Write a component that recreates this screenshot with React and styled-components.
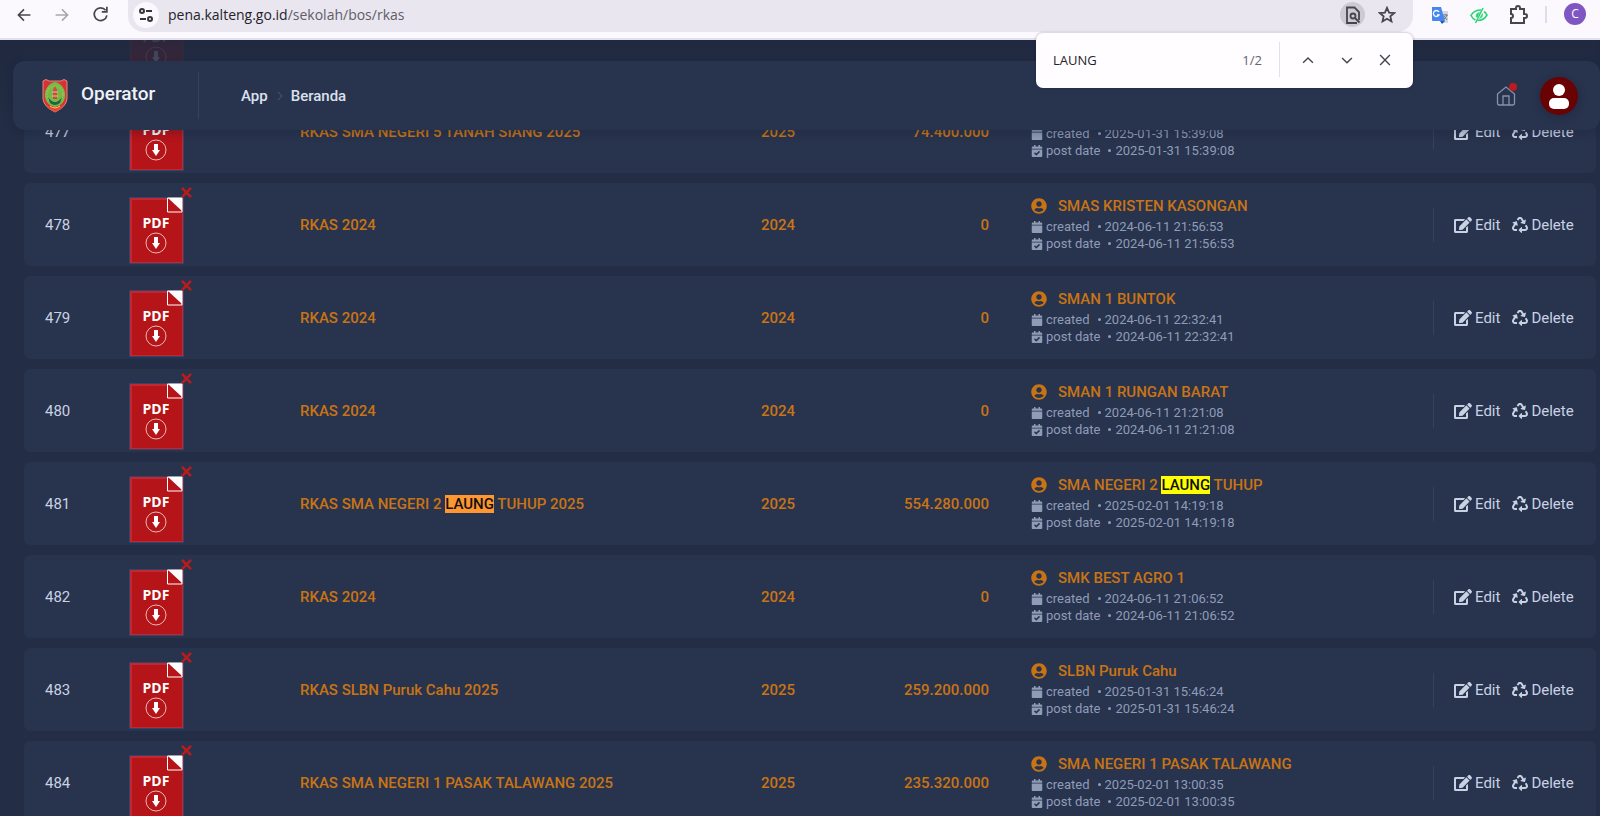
import React from "react";
import styled, { createGlobalStyle, css } from "styled-components";
import { FaUserCircle, FaCalendar, FaCalendarCheck, FaEdit, FaRecycle } from "react-icons/fa";

const GlobalStyle = createGlobalStyle`
  * { box-sizing: border-box; }
  body { margin: 0; background: #232d45; font-family: Roboto, sans-serif; }
  a { color: inherit; text-decoration: none; }
  button { border: 0; padding: 0; background: none; color: inherit; font: inherit; cursor: pointer; }
`;

const Shell = styled.div`
  display: flex;
  flex-direction: column;
  height: 100vh;
  overflow: hidden;
`;

/* browser toolbar */

const Toolbar = styled.div`
  position: relative;
  z-index: 3;
  flex: none;
  display: flex;
  align-items: flex-start;
  height: 40px;
  padding: 0 14px 0 12px;
  background: #fbf8fe;
  border-bottom: 2px solid #e3e0ee;
  font-family: "Open Sans", sans-serif;
`;

const ToolButton = styled.button`
  display: flex;
  align-items: center;
  justify-content: center;
  width: ${(p) => p.$width || 39}px;
  height: 29px;
  color: ${(p) => (p.$dim ? "#a9a7ae" : "#47464d")};
`;

const AddressBar = styled.form`
  flex: 1;
  display: flex;
  align-items: center;
  height: 32px;
  margin: 0 7px 0 16px;
  padding: 0 14px 3px 5px;
  background: #e9e6f0;
  border-radius: 0 0 16px 16px;
`;

const SiteButton = styled.button`
  display: flex;
  align-items: center;
  justify-content: center;
  width: 26px;
  height: 26px;
  border-radius: 50%;
  background: #fbf8fe;
  color: #36353b;
`;

const Address = styled.a`
  flex: 1;
  padding-left: 9px;
  font-size: 14px;
  line-height: 24px;
  color: #5f5d66;
  strong { font-weight: 400; color: #24232a; }
`;

const PillButton = styled.button`
  display: flex;
  align-items: center;
  justify-content: center;
  width: 25px;
  height: 25px;
  margin-left: 9px;
  border-radius: 50%;
  background: ${(p) => (p.$active ? "#cdcad4" : "transparent")};
  color: #47464d;
`;

const ToolDivider = styled.span`
  width: 2px;
  height: 17px;
  margin: 6px 17px 0 8px;
  background: #e0dbef;
`;

const Profile = styled.button`
  width: 22px;
  height: 22px;
  margin-top: 3px;
  && { background: #7e57c2; color: #fff; font-size: 12px; line-height: 22px; }
  border-radius: 50%;
`;

const FindBar = styled.form`
  position: absolute;
  top: 33px;
  right: 187px;
  display: flex;
  align-items: center;
  width: 377px;
  height: 55px;
  padding: 0 9px 2px 17px;
  border-radius: 7px;
  background: #fffdff;
  box-shadow: 0 0 3px rgba(20, 20, 50, 0.35);
`;

const FindInput = styled.input`
  flex: 1;
  min-width: 0;
  border: 0;
  padding: 0;
  outline: 0;
  background: none;
  font: 13px "Open Sans", sans-serif;
  color: #24232a;
`;

const FindCount = styled.output`
  padding-right: 17px;
  font-size: 13px;
  color: #66646c;
`;

const FindDivider = styled.span`
  width: 1px;
  height: 35px;
  margin-right: 8px;
  background: #e4e0ea;
`;

/* application */

const Viewport = styled.main`
  position: relative;
  flex: 1;
  min-height: 0;
  overflow: hidden;
`;

const TopFade = styled.div`
  position: absolute;
  inset: 0 0 auto;
  height: 72px;
  background: linear-gradient(rgba(31, 40, 62, 0.9), rgba(33, 43, 66, 0.7));
`;

const AppBar = styled.header`
  position: absolute;
  top: 21px;
  left: 13px;
  right: 0;
  display: flex;
  align-items: center;
  height: 69px;
  padding: 0 22px 0 29px;
  border-radius: 12px;
  background: #28334e;
  box-shadow: 0 3px 8px rgba(20, 28, 48, 0.3);
`;

const Brand = styled.a`
  display: flex;
  align-items: center;
  gap: 13px;
  width: 157px;
  height: 47px;
  border-right: 1px solid #354260;
  padding-bottom: 4px;
  font-size: 19px;
  font-weight: 500;
  line-height: 24px;
  color: #eef1f7;
  svg { margin-top: 5px; }
`;

const Crumbs = styled.nav`
  flex: 1;
  display: flex;
  align-items: center;
  gap: 8px;
  padding-left: 42px;
  font-size: 15px;
  font-weight: 500;
  color: #dbe1ec;
`;

const HomeButton = styled.button`
  position: relative;
  display: flex;
  margin-right: 24px;
  && { color: #8592ad; }
`;

const Dot = styled.span`
  position: absolute;
  top: -3px;
  right: -1px;
  width: 8px;
  height: 8px;
  border-radius: 50%;
  background: #b91c1c;
`;

const Avatar = styled.button`
  width: 38px;
  height: 38px;
  && { background: #690203; }
  border-radius: 50%;
  box-shadow: 0 2px 8px rgba(15, 20, 35, 0.3);
`;

const ListWindow = styled.div`
  margin-top: -53px;
  padding: 0 4px 0 24px;
`;

const Table = styled.table`
  width: 100%;
  table-layout: fixed;
  border-collapse: separate;
  border-spacing: 0 10px;
`;

const Row = styled.tr`
  height: 83px;
  font-size: 15px;
  line-height: 20px;
  color: #c8d2e3;
`;

const Cell = styled.td`
  padding: 0 0 0 ${(p) => p.$indent || 0}px;
  background: #28334e;
  text-align: ${(p) => p.$align || "left"};
  &:first-child { border-radius: 6px 0 0 6px; }
  &:last-child { border-radius: 0 6px 6px 0; }
  ${(p) =>
    p.$accent &&
    css`
      color: #c97414;
      font-weight: 500;
    `}
`;

const FileBox = styled.div`
  display: flex;
  align-items: flex-start;
  height: 83px;
  padding-top: 3px;
  a { display: block; margin-top: 11px; }
  svg { display: block; }
  button { margin-left: -4px; color: #b91c1c; }
`;

const Owner = styled.div`
  padding-bottom: 3px;
`;

const School = styled.div`
  display: flex;
  align-items: center;
  gap: 11px;
  height: 24px;
  color: #c97414;
  font-weight: 500;
`;

const Meta = styled.div`
  display: flex;
  align-items: center;
  gap: 3px;
  font-size: 13px;
  line-height: 17px;
  color: #8f9cb7;
`;

const Stamp = styled.time`
  display: flex;
  align-items: center;
  gap: 4px;
  padding-left: 5px;
  &::before {
    content: "";
    width: 3px;
    height: 3px;
    border-radius: 50%;
    background: currentColor;
  }
`;

const Actions = styled.div`
  display: flex;
  align-items: center;
  gap: 12px;
  height: 34px;
  padding-left: 20px;
  border-left: 1px solid #35415e;
  a { display: flex; align-items: center; gap: 3px; }
`;

const Mark = styled.mark`
  color: #111;
  background: ${(p) => (p.$current ? "#ff9632" : "#ffff00")};
`;

const Line = ({ size = 20, d, width = 2, fill = "none" }) => (
  <svg width={size} height={size} viewBox="0 0 20 20" fill={fill} stroke="currentColor" strokeWidth={width} aria-hidden="true">
    <path d={d} />
  </svg>
);

const Crest = () => (
  <svg width="26" height="34" viewBox="0 0 26 34" aria-hidden="true">
    <path d="M1 2Q4-1 7 2H19Q22-1 25 2V20Q24 28 13 33Q2 28 1 20Z" fill="#dc3038" stroke="#d98c76" />
    <path d="M13 3C19 4 24 10 23 18C22 24 18 27 13 28C8 27 4 24 3 18C2 10 7 4 13 3Z" fill="#78b944" />
    <circle cx="13" cy="15" r="8" fill="none" stroke="#8fbf5a" strokeWidth="2" strokeDasharray="2 1" />
    <path d="M6 18Q13 28 20 18L18 24Q13 28 8 24Z" fill="#1c6744" />
    <path d="M13 7L15 11V20H11V11Z" fill="#cb4b42" />
    <path d="M10 13H16M10 17H16" stroke="#e8c39b" />
    <path d="M5 26L13 31L21 26L19 30L13 33L7 30Z" fill="#e94935" />
    <path d="M8 27Q13 31 18 27" fill="none" stroke="#f1db62" strokeWidth="1" />
  </svg>
);

const PdfIcon = () => (
  <svg width="55" height="67" viewBox="0 0 55 67" role="img" aria-label="PDF">
    <rect width="55" height="67" fill="#354466" />
    <rect x="1" y="1" width="53" height="65" fill="#c22735" />
    <rect x="3" y="3" width="50" height="62" fill="#b51419" />
    <path d="M38.500 1H53V15H38.500Z" fill="#b51419" stroke="#fff" />
    <path d="M39 1H53V14Z" fill="#fff" />
    <text x="27" y="31" textAnchor="middle" fill="#fff" fontFamily="Open Sans, sans-serif" fontWeight="700" fontSize="14">PDF</text>
    <circle cx="27" cy="46" r="10" fill="none" stroke="#e9b9b9" />
    <path d="M25 40H29V46H31L27 52L23 46H25Z" fill="#fff" />
  </svg>
);

const TranslateIcon = () => (
  <svg width="18" height="18" viewBox="0 0 18 18" aria-hidden="true">
    <path d="M8 5H17V17H10Z" fill="#d5d8de" />
    <path d="M1 1H10L14 15H2Q1 15 1 14Z" fill="#4587ed" />
    <path d="M9 15H14L11 18Z" fill="#2457b8" />
    <path d="M8 6A3 3 0 1 0 8 9H6" fill="none" stroke="#fff" strokeWidth="1.3" />
    <path d="M12 9H17M14.500 8V9M16 9Q15 12 13 13M13 10L16 14" fill="none" stroke="#6c7a8c" />
  </svg>
);

const EyeIcon = () => (
  <svg width="18" height="18" viewBox="0 0 18 18" fill="none" stroke="#2bd576" strokeWidth="1.6" aria-hidden="true">
    <path d="M11 4Q4 4 1 9.500Q2.500 12.500 5.500 14M14 5.500Q16 7 17 9Q14 14.500 7.500 14.500" />
    <path d="M13 2L5.500 17" />
    <path d="M9.500 6.500Q5.500 7 6 11L7.500 11ZM12.500 7.500L9.500 12.500Q13.500 11 12.500 7.500Z" fill="#2bd576" strokeWidth="0.5" />
  </svg>
);

const rows = [
  [476, "", "", "", "", ""],
  [477, "RKAS SMA NEGERI 5 TANAH SIANG 2025", 2025, "74.400.000", "SMA NEGERI 5 TANAH SIANG", "2025-01-31 15:39:08"],
  [478, "RKAS 2024", 2024, "0", "SMAS KRISTEN KASONGAN", "2024-06-11 21:56:53"],
  [479, "RKAS 2024", 2024, "0", "SMAN 1 BUNTOK", "2024-06-11 22:32:41"],
  [480, "RKAS 2024", 2024, "0", "SMAN 1 RUNGAN BARAT", "2024-06-11 21:21:08"],
  [481, "RKAS SMA NEGERI 2 LAUNG TUHUP 2025", 2025, "554.280.000", "SMA NEGERI 2 LAUNG TUHUP", "2025-02-01 14:19:18"],
  [482, "RKAS 2024", 2024, "0", "SMK BEST AGRO 1", "2024-06-11 21:06:52"],
  [483, "RKAS SLBN Puruk Cahu 2025", 2025, "259.200.000", "SLBN Puruk Cahu", "2025-01-31 15:46:24"],
  [484, "RKAS SMA NEGERI 1 PASAK TALAWANG 2025", 2025, "235.320.000", "SMA NEGERI 1 PASAK TALAWANG", "2025-02-01 13:00:35"],
];

const Found = ({ text, current }) => {
  const [before, after] = text.split("LAUNG");
  if (after === undefined) return <span>{text}</span>;
  return (
    <span>
      {before}
      <Mark $current={current}>LAUNG</Mark>
      {after}
    </span>
  );
};

const RecordRow = ({ record: [no, title, year, amount, school, date] }) => (
  <Row>
    <Cell $indent={21}>{title && no}</Cell>
    <Cell>
      <FileBox>
        <a href="#pdf"><PdfIcon /></a>
        <button aria-label="Remove file"><Line size={13} width={4} d="M3 3L17 17M17 3L3 17" /></button>
      </FileBox>
    </Cell>
    <Cell $accent><Found text={title} current /></Cell>
    <Cell $accent $align="center">{year}</Cell>
    <Cell $accent $align="right">{amount}</Cell>
    <Cell $indent={42}>
      {title && (
        <Owner>
          <School><FaUserCircle size={16} /><Found text={school} /></School>
          <Meta><FaCalendar size={12} />created <Stamp>{date}</Stamp></Meta>
          <Meta><FaCalendarCheck size={12} />post date <Stamp>{date}</Stamp></Meta>
        </Owner>
      )}
    </Cell>
    <Cell>
      {title && (
        <Actions>
          <a href="#edit"><FaEdit size={18} />Edit</a>
          <a href="#delete"><FaRecycle size={16} />Delete</a>
        </Actions>
      )}
    </Cell>
  </Row>
);

export default function App() {
  return (
    <Shell>
      <GlobalStyle />
      <Toolbar>
        <ToolButton $width={24} aria-label="Back"><Line size={16} d="M18 10H3M10 3L3 10L10 17" /></ToolButton>
        <ToolButton $width={52} $dim aria-label="Forward"><Line size={16} d="M2 10H17M10 3L17 10L10 17" /></ToolButton>
        <ToolButton $width={24} aria-label="Reload"><Line size={17} d="M16 5A7.500 7.500 0 1 0 17.500 11M17.500 1V7H11.500" /></ToolButton>
        <AddressBar onSubmit={(e) => e.preventDefault()}>
          <SiteButton type="button" aria-label="Site information">
            <svg width="16" height="16" viewBox="0 0 16 16" fill="none" stroke="currentColor" strokeWidth="2" aria-hidden="true">
              <circle cx="4" cy="4" r="2" /><path d="M8 4H14M2 12H8" /><circle cx="12" cy="12" r="2" />
            </svg>
          </SiteButton>
          <Address href="#rkas"><strong>pena.kalteng.go.id</strong>/sekolah/bos/rkas</Address>
          <PillButton type="button" $active aria-label="Find in page">
            <svg width="16" height="18" viewBox="0 0 16 18" fill="none" stroke="currentColor" strokeWidth="1.8" aria-hidden="true">
              <path d="M12 17H2V1.500H9.500L14 6V14" /><circle cx="8" cy="10" r="2.500" /><path d="M10 12L14.500 16.500" />
            </svg>
          </PillButton>
          <PillButton type="button" aria-label="Bookmark">
            <Line size={18} d="M10 2L12.300 7.300L18 7.800L13.700 11.600L15 17.200L10 14.200L5 17.200L6.300 11.600L2 7.800L7.700 7.300Z" />
          </PillButton>
        </AddressBar>
        <ToolButton aria-label="Translate"><TranslateIcon /></ToolButton>
        <ToolButton aria-label="Reader"><EyeIcon /></ToolButton>
        <ToolButton aria-label="Extensions"><Line size={20} d="M3 4H8V3A2 2 0 0 1 12 3V4H16V9H17A2 2 0 0 1 17 13H16V18H3V13A2 2 0 0 0 3 9Z" /></ToolButton>
        <ToolDivider />
        <Profile aria-label="Profile">C</Profile>
        <FindBar onSubmit={(e) => e.preventDefault()}>
          <FindInput aria-label="Find in page" defaultValue="LAUNG" />
          <FindCount>1/2</FindCount>
          <FindDivider />
          <ToolButton type="button" aria-label="Previous match"><Line size={14} d="M3 14L10 7L17 14" /></ToolButton>
          <ToolButton type="button" aria-label="Next match"><Line size={14} d="M3 7L10 14L17 7" /></ToolButton>
          <ToolButton type="button" $width={38} aria-label="Close find bar"><Line size={14} d="M3 3L17 17M17 3L3 17" /></ToolButton>
        </FindBar>
      </Toolbar>
      <Viewport>
        <ListWindow>
          <Table>
            <colgroup>
              <col width="105" /><col width="171" /><col /><col width="156" />
              <col width="133" /><col width="444" /><col width="163" />
            </colgroup>
            <tbody>
              {rows.map((record) => <RecordRow key={record[0]} record={record} />)}
            </tbody>
          </Table>
        </ListWindow>
        <TopFade />
        <AppBar>
          <Brand href="#operator"><Crest />Operator</Brand>
          <Crumbs aria-label="Breadcrumb">
            <a href="#app">App</a>
            <svg width="7" height="10" viewBox="0 0 7 10" fill="none" stroke="#4b5875" aria-hidden="true"><path d="M2 1L6 5L2 9" /></svg>
            <a href="#beranda">Beranda</a>
          </Crumbs>
          <HomeButton aria-label="Home">
            <svg width="20" height="20" viewBox="0 0 20 20" fill="none" stroke="currentColor" strokeWidth="1.300" aria-hidden="true">
              <path d="M1.500 8L10 1L18.500 8V17Q18.500 19 17 19H3Q1.500 19 1.500 17ZM7 19V10H13V19" />
            </svg>
            <Dot />
          </HomeButton>
          <Avatar aria-label="Account">
            <svg width="38" height="38" viewBox="0 0 38 38" fill="#fff" aria-hidden="true">
              <rect x="13" y="7" width="12" height="12" rx="6" /><rect x="9" y="21" width="20" height="11" rx="5" />
            </svg>
          </Avatar>
        </AppBar>
      </Viewport>
    </Shell>
  );
}
